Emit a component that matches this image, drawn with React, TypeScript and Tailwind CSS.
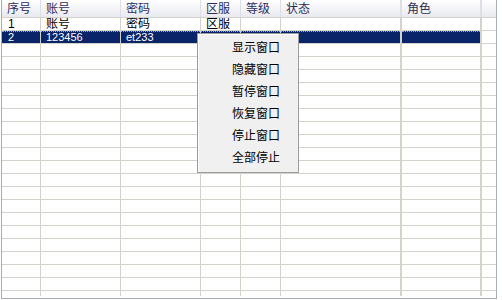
// Account list grid with right-click menu
const cols = [
  { label: '序号', w: 'w-[39px] border-r' },
  { label: '账号', w: 'w-[80px] border-r' },
  { label: '密码', w: 'w-[80px] border-r' },
  { label: '区服', w: 'w-[40px] border-r' },
  { label: '等级', w: 'w-[40px] border-r' },
  { label: '状态', w: 'w-[121px] border-r-2' },
  { label: '角色', w: 'w-[80px] border-r-2' },
  { label: '', w: 'flex-1' },
];

const rows: string[][] = [
  ['1', '账号', '密码', '区服'],
  ['2', '123456', 'et233'],
  ...Array.from({ length: 20 }, () => [] as string[]),
];

const menu = ['显示窗口', '隐藏窗口', '暂停窗口', '恢复窗口', '停止窗口', '全部停止'];

export default function App() {
  return (
    <div className="relative w-[502px] h-[300px] overflow-hidden bg-white"
      style={{ fontFamily: '"Liberation Sans","Noto Sans CJK SC",sans-serif' }}>
      <div className="ml-[1px] w-[496px] h-[299px] border-l border-r border-b border-[#a7adb6] flex flex-col">
        {/* header */}
        <div className="flex h-[18px] shrink-0 border-b border-[#d5d2cb] bg-gradient-to-b from-white to-[#e9eaf0]">
          {cols.map((c, i) => (
            <div key={i} className={`${c.w} h-full overflow-hidden border-[#dedee6] pl-[5px] text-[12px] leading-[19px] text-[#2c2e5e]`}>
              {c.label}
            </div>
          ))}
        </div>

        {/* body */}
        <div className="h-[278px] overflow-hidden">
          {rows.map((r, ri) => {
            const sel = ri === 1;
            return (
              <div key={ri} className="flex h-[13px] border-b border-[#d5d2cb]">
                {cols.map((c, ci) => {
                  const blue = sel && ci < 7;
                  if (blue) {
                    return (
                      <div key={ci} className={`${c.w} h-full border-[#d5d2cb] bg-[#0a246a] flex flex-col`}>
                        <div className="h-0 border-t border-dotted border-[#9aa6cc]" />
                        <div className={`${ci === 0 ? 'pl-[6px]' : 'pl-[5px]'} text-white text-[11px] leading-[11px] whitespace-nowrap`}>
                          {r[ci] ?? ''}
                        </div>
                      </div>
                    );
                  }
                  return (
                    <div key={ci}
                      className={`${c.w} h-full border-[#d5d2cb] ${ci === 0 ? 'pl-[6px]' : 'pl-[5px]'} whitespace-nowrap overflow-hidden text-black text-[12px] leading-[12px]`}>
                      {r[ci] ?? ''}
                    </div>
                  );
                })}
              </div>
            );
          })}
        </div>
      </div>

      {/* context menu */}
      <div className="absolute left-[197px] top-[33px] w-[102px] h-[140px] bg-[#f0f0f0] border border-[#9c9c9c] shadow-[inset_1px_1px_0_#ffffff] py-[3px]">
        {menu.map((m) => (
          <div key={m} className="h-[22px] pl-[34px] text-[12px] leading-[22px] text-black">
            {m}
          </div>
        ))}
      </div>
    </div>
  );
}
